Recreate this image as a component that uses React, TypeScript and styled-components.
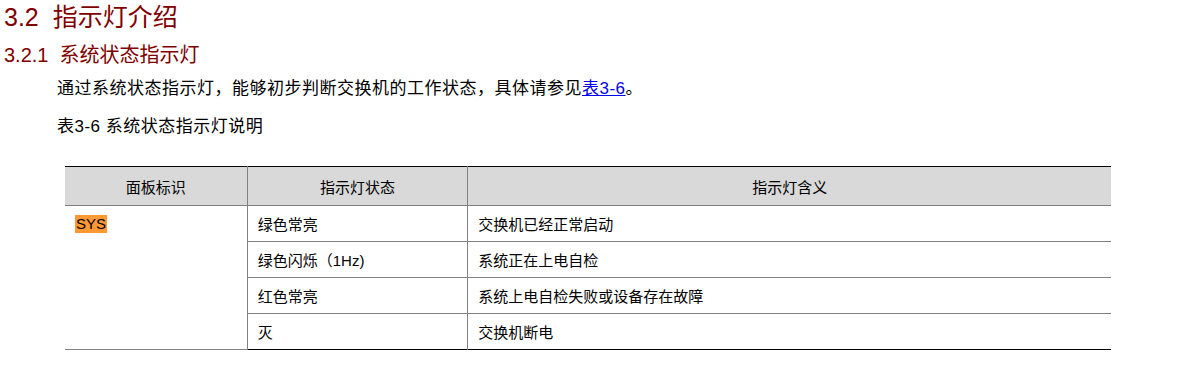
import styled, { createGlobalStyle } from 'styled-components';

const GlobalStyle = createGlobalStyle`
  body {
    margin: 0;
    background: #fff;
    color: #000;
    font-family: "Liberation Sans", "Noto Sans CJK SC", Arial, sans-serif;
  }
`;

const maroon = '#800000';
const ruleGray = '#808080';

const rows = [
  { state: '绿色常亮', meaning: '交换机已经正常启动' },
  { state: '绿色闪烁（1Hz)', meaning: '系统正在上电自检' },
  { state: '红色常亮', meaning: '系统上电自检失败或设备存在故障' },
  { state: '灭', meaning: '交换机断电' },
];

const Page = styled.div`
  padding: 0 0 20px 4px;
`;

const Title = styled.h1`
  margin: 0;
  font-size: 25px;
  line-height: 34px;
  font-weight: normal;
  color: ${maroon};
`;

const SubTitle = styled.h2`
  margin: 8px 0 0;
  font-size: 20px;
  line-height: 26px;
  font-weight: normal;
  color: ${maroon};
`;

const Num = styled.span<{ $gap: number }>`
  display: inline-block;
  margin-right: ${(p) => p.$gap}px;
`;

const Body = styled.div`
  padding-left: 53px;
`;

const Para = styled.p`
  margin: 9px 0 0;
  font-size: 17px;
  line-height: 24px;
  letter-spacing: 0.5px;
`;

const Ref = styled.a`
  color: #0000ee;
  text-decoration: underline;
`;

const Caption = styled.p`
  margin: 14px 0 0;
  font-size: 17px;
  line-height: 24px;
  letter-spacing: 0.5px;
`;

const Table = styled.table`
  margin: 27px 0 0 8px;
  width: 1046px;
  border-collapse: collapse;
  border-top: 1px solid #000;
  border-bottom: 1px solid #000;
  font-size: 15px;
`;

const Head = styled.th<{ $w: number }>`
  width: ${(p) => p.$w}px;
  height: 38px;
  padding: 0;
  background: #d9d9d9;
  font-weight: normal;
  text-align: center;
  border-bottom: 1px solid ${ruleGray};
  & + & {
    border-left: 1px solid ${ruleGray};
  }
`;

const Cell = styled.td<{ $first?: boolean }>`
  height: 35px;
  padding: 0 10px;
  vertical-align: ${(p) => (p.$first ? 'top' : 'middle')};
  border-left: ${(p) => (p.$first ? 'none' : `1px solid ${ruleGray}`)};
  border-bottom: 1px solid ${ruleGray};
  tr:last-child & {
    border-bottom: none;
  }
`;

const Mark = styled.span`
  display: inline-block;
  margin-top: 9px;
  padding: 0 1px;
  line-height: 18px;
  background: #ff9933;
`;

export default function App() {
  return (
    <Page>
      <GlobalStyle />
      <Title>
        <Num $gap={14}>3.2</Num>指示灯介绍
      </Title>
      <SubTitle>
        <Num $gap={11}>3.2.1</Num>系统状态指示灯
      </SubTitle>
      <Body>
        <Para>
          通过系统状态指示灯，能够初步判断交换机的工作状态，具体请参见<Ref href="#t3-6">表3-6</Ref>。
        </Para>
        <Caption>表3-6 系统状态指示灯说明</Caption>
        <Table id="t3-6">
          <thead>
            <tr>
              <Head $w={182}>面板标识</Head>
              <Head $w={220}>指示灯状态</Head>
              <Head $w={644}>指示灯含义</Head>
            </tr>
          </thead>
          <tbody>
            {rows.map((r, i) => (
              <tr key={r.state}>
                {i === 0 && (
                  <Cell $first rowSpan={rows.length}>
                    <Mark>SYS</Mark>
                  </Cell>
                )}
                <Cell>{r.state}</Cell>
                <Cell>{r.meaning}</Cell>
              </tr>
            ))}
          </tbody>
        </Table>
      </Body>
    </Page>
  );
}
